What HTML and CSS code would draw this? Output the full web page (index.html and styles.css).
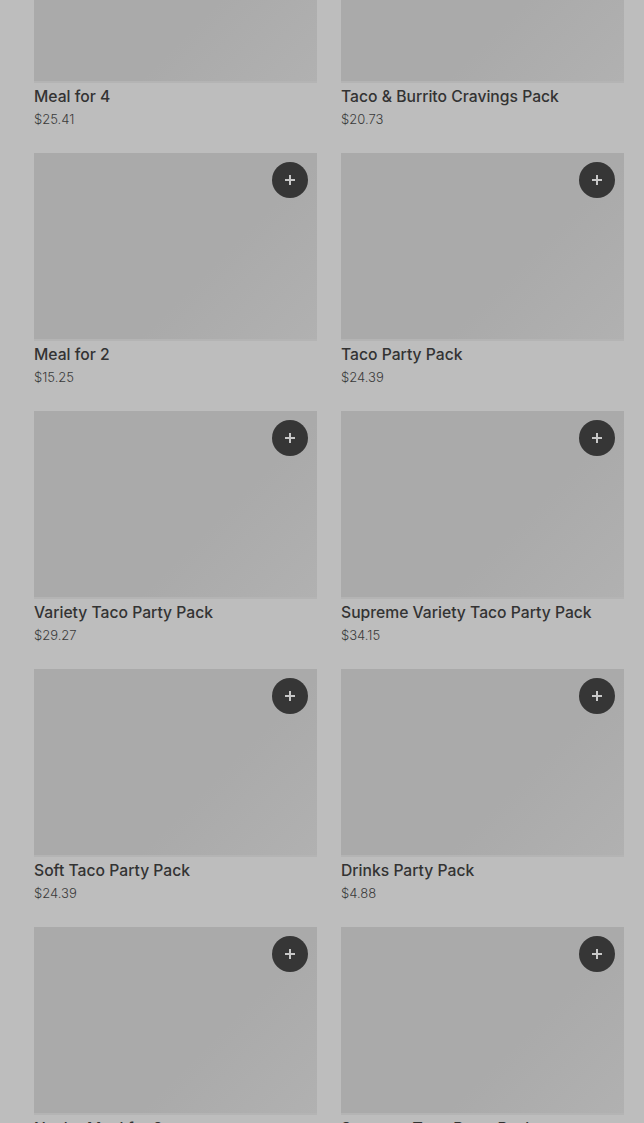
FILE: index.html
```html
<!DOCTYPE html>
<html>
<head>
  <title>Party Packs</title>
  <link rel="stylesheet" href="styles.css">
</head>
<body>
  <div class="grid">
    <div class="card">
      <div class="photo"></div>
      <h3>Meal for 4</h3>
      <p class="price">$25.41</p>
    </div>
    <div class="card">
      <div class="photo"></div>
      <h3>Taco &amp; Burrito Cravings Pack</h3>
      <p class="price">$20.73</p>
    </div>

    <div class="card">
      <div class="photo">
        <button class="add-btn"><svg viewBox="0 0 12 12"><path d="M6 1v10M1 6h10"/></svg></button>
      </div>
      <h3>Meal for 2</h3>
      <p class="price">$15.25</p>
    </div>
    <div class="card">
      <div class="photo">
        <button class="add-btn"><svg viewBox="0 0 12 12"><path d="M6 1v10M1 6h10"/></svg></button>
      </div>
      <h3>Taco Party Pack</h3>
      <p class="price">$24.39</p>
    </div>

    <div class="card">
      <div class="photo">
        <button class="add-btn"><svg viewBox="0 0 12 12"><path d="M6 1v10M1 6h10"/></svg></button>
      </div>
      <h3>Variety Taco Party Pack</h3>
      <p class="price">$29.27</p>
    </div>
    <div class="card">
      <div class="photo">
        <button class="add-btn"><svg viewBox="0 0 12 12"><path d="M6 1v10M1 6h10"/></svg></button>
      </div>
      <h3>Supreme Variety Taco Party Pack</h3>
      <p class="price">$34.15</p>
    </div>

    <div class="card">
      <div class="photo">
        <button class="add-btn"><svg viewBox="0 0 12 12"><path d="M6 1v10M1 6h10"/></svg></button>
      </div>
      <h3>Soft Taco Party Pack</h3>
      <p class="price">$24.39</p>
    </div>
    <div class="card">
      <div class="photo">
        <button class="add-btn"><svg viewBox="0 0 12 12"><path d="M6 1v10M1 6h10"/></svg></button>
      </div>
      <h3>Drinks Party Pack</h3>
      <p class="price">$4.88</p>
    </div>

    <div class="card">
      <div class="photo">
        <button class="add-btn"><svg viewBox="0 0 12 12"><path d="M6 1v10M1 6h10"/></svg></button>
      </div>
      <h3>Nacho Meal for 2</h3>
      <p class="price">$12.19</p>
    </div>
    <div class="card">
      <div class="photo">
        <button class="add-btn"><svg viewBox="0 0 12 12"><path d="M6 1v10M1 6h10"/></svg></button>
      </div>
      <h3>Supreme Taco Party Pack</h3>
      <p class="price">$29.27</p>
    </div>
  </div>
</body>
</html>
```

FILE: styles.css
```css
body {
  margin: 0;
  padding: 0;
  background-color: #bdbdbd;
  font-family: "Inter", "Roboto", sans-serif;
  color: #333;
  overflow: hidden;
  height: 1123px;
}

/* page is scrolled a bit, first row cut off */
.grid {
  display: grid;
  grid-template-columns: 283px 283px;
  column-gap: 24px;
  row-gap: 25px;
  padding: 0 20px 0 34px;
  margin-top: -105px;
}

.photo {
  position: relative;
  height: 188px;
  background: linear-gradient(135deg, #aaaaaa 0%, #aaaaaa 62%, #b1b1b1 100%);
  border-bottom: 2px solid #b4b4b4;
  box-sizing: border-box;
}

.add-btn {
  position: absolute;
  top: 9px;
  right: 9px;
  width: 36px;
  height: 36px;
  border-radius: 50%;
  border: none;
  padding: 0;
  background-color: #363636;
  display: flex;
  align-items: center;
  justify-content: center;
}

.add-btn svg {
  width: 12px;
  height: 12px;
  stroke: #c8c8c8;
  stroke-width: 2;
  fill: none;
}

.card h3 {
  margin: 4px 0 0;
  font-size: 15.7px;
  font-weight: 500;
  line-height: 20px;
  color: #333;
}

.price {
  margin: 3px 0 0;
  font-size: 13px;
  font-weight: 300;
  line-height: 18px;
  color: #3a3a3a;
}
```
